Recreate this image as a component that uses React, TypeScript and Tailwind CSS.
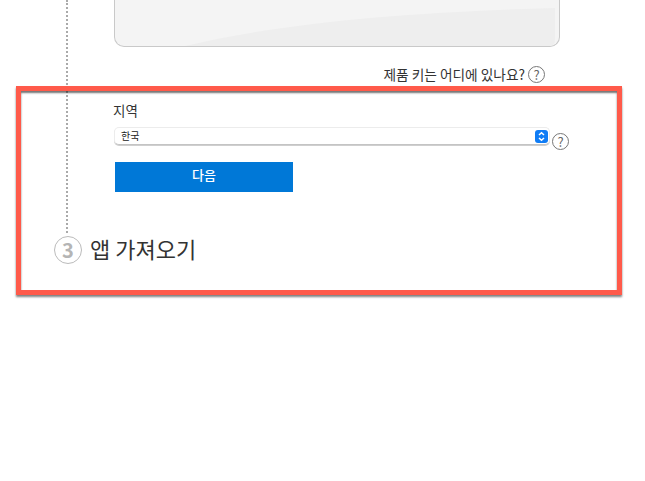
function HelpIcon({ className }: { className: string }) {
  return (
    <span className={`flex h-[17px] w-[17px] shrink-0 items-center justify-center rounded-full border border-[#777] text-[13px] leading-none text-[#666] ${className}`}>
      ?
    </span>
  );
}

export default function App() {
  return (
    <div
      className="relative h-[481px] w-[645px] overflow-hidden bg-white text-[#333]"
      style={{ fontFamily: '"Noto Sans CJK KR", "Noto Sans", sans-serif' }}
    >
      {/* step 2 body, dotted connector on the left */}
      <div className="ml-[66px] h-[233px] border-l-2 border-dotted border-[#aaa] pl-[46px]">
        {/* product key box */}
        <div className="relative h-[47px] w-[446px] overflow-hidden rounded-b-[10px] border border-t-0 border-[#c9c9c9] bg-[#f4f4f4]">
          <svg className="absolute inset-0" width="446" height="46" viewBox="0 0 446 46">
            <path d="M70 46 C170 22 300 12 440 8 L440 40 Q440 46 434 46 Z" fill="#eeeeee" />
          </svg>
        </div>

        <div className="mt-[18px] flex w-[431px] items-center justify-end gap-[3px]">
          <span className="text-[13.7px] leading-[18px] text-[#333]">제품 키는 어디에 있나요?</span>
          <HelpIcon className="" />
        </div>

        <div className="mt-[18px] -ml-[1px] text-[13.5px] leading-[18px]">지역</div>

        <div className="mt-[8px] flex w-[456px] items-start">
          <div className="flex h-[18px] w-[436px] items-center justify-between rounded-[5px] border border-[#ececec] border-b-[#c4c4c4] bg-white pr-[1px] pl-[6px] text-[10px] shadow-[0_1px_0_#cfcfcf]">
            <span className="leading-none text-[#222]">한국</span>
            <span className="flex h-[13px] w-[13px] items-center justify-center rounded-[3px] bg-[#0f7cf5]">
              <svg width="7" height="11" viewBox="0 0 7 11" fill="none" stroke="#fff" strokeWidth="1.5">
                <path d="M1 4 L3.5 1.7 L6 4" />
                <path d="M1 7 L3.5 9.3 L6 7" />
              </svg>
            </span>
          </div>
          <HelpIcon className="mt-[6px] ml-[2px]" />
        </div>

        <button className="mt-[12px] ml-[1px] flex h-[30px] w-[178px] items-center justify-center bg-[#0078d7] pb-[4px] text-[13px] font-medium text-white">
          다음
        </button>
      </div>

      {/* step 3 heading */}
      <div className="mt-[3px] ml-[54px] flex items-center gap-[8px]">
        <span className="flex h-[28px] w-[28px] items-center justify-center rounded-full border border-[#bbb] text-[20px] font-bold text-[#b5b5b5]">
          3
        </span>
        <h2 className="-translate-y-[2px] text-[22px] leading-[28px] font-normal text-[#333]">앱 가져오기</h2>
      </div>

      {/* red annotation frame over the page */}
      <div className="pointer-events-none absolute top-[86px] left-[16px] h-[209px] w-[606px] border-[5px] border-[#ff5a4a] shadow-[0_2px_2px_rgba(0,0,0,0.5),inset_0_2px_2px_rgba(0,0,0,0.55)]" />
    </div>
  );
}
